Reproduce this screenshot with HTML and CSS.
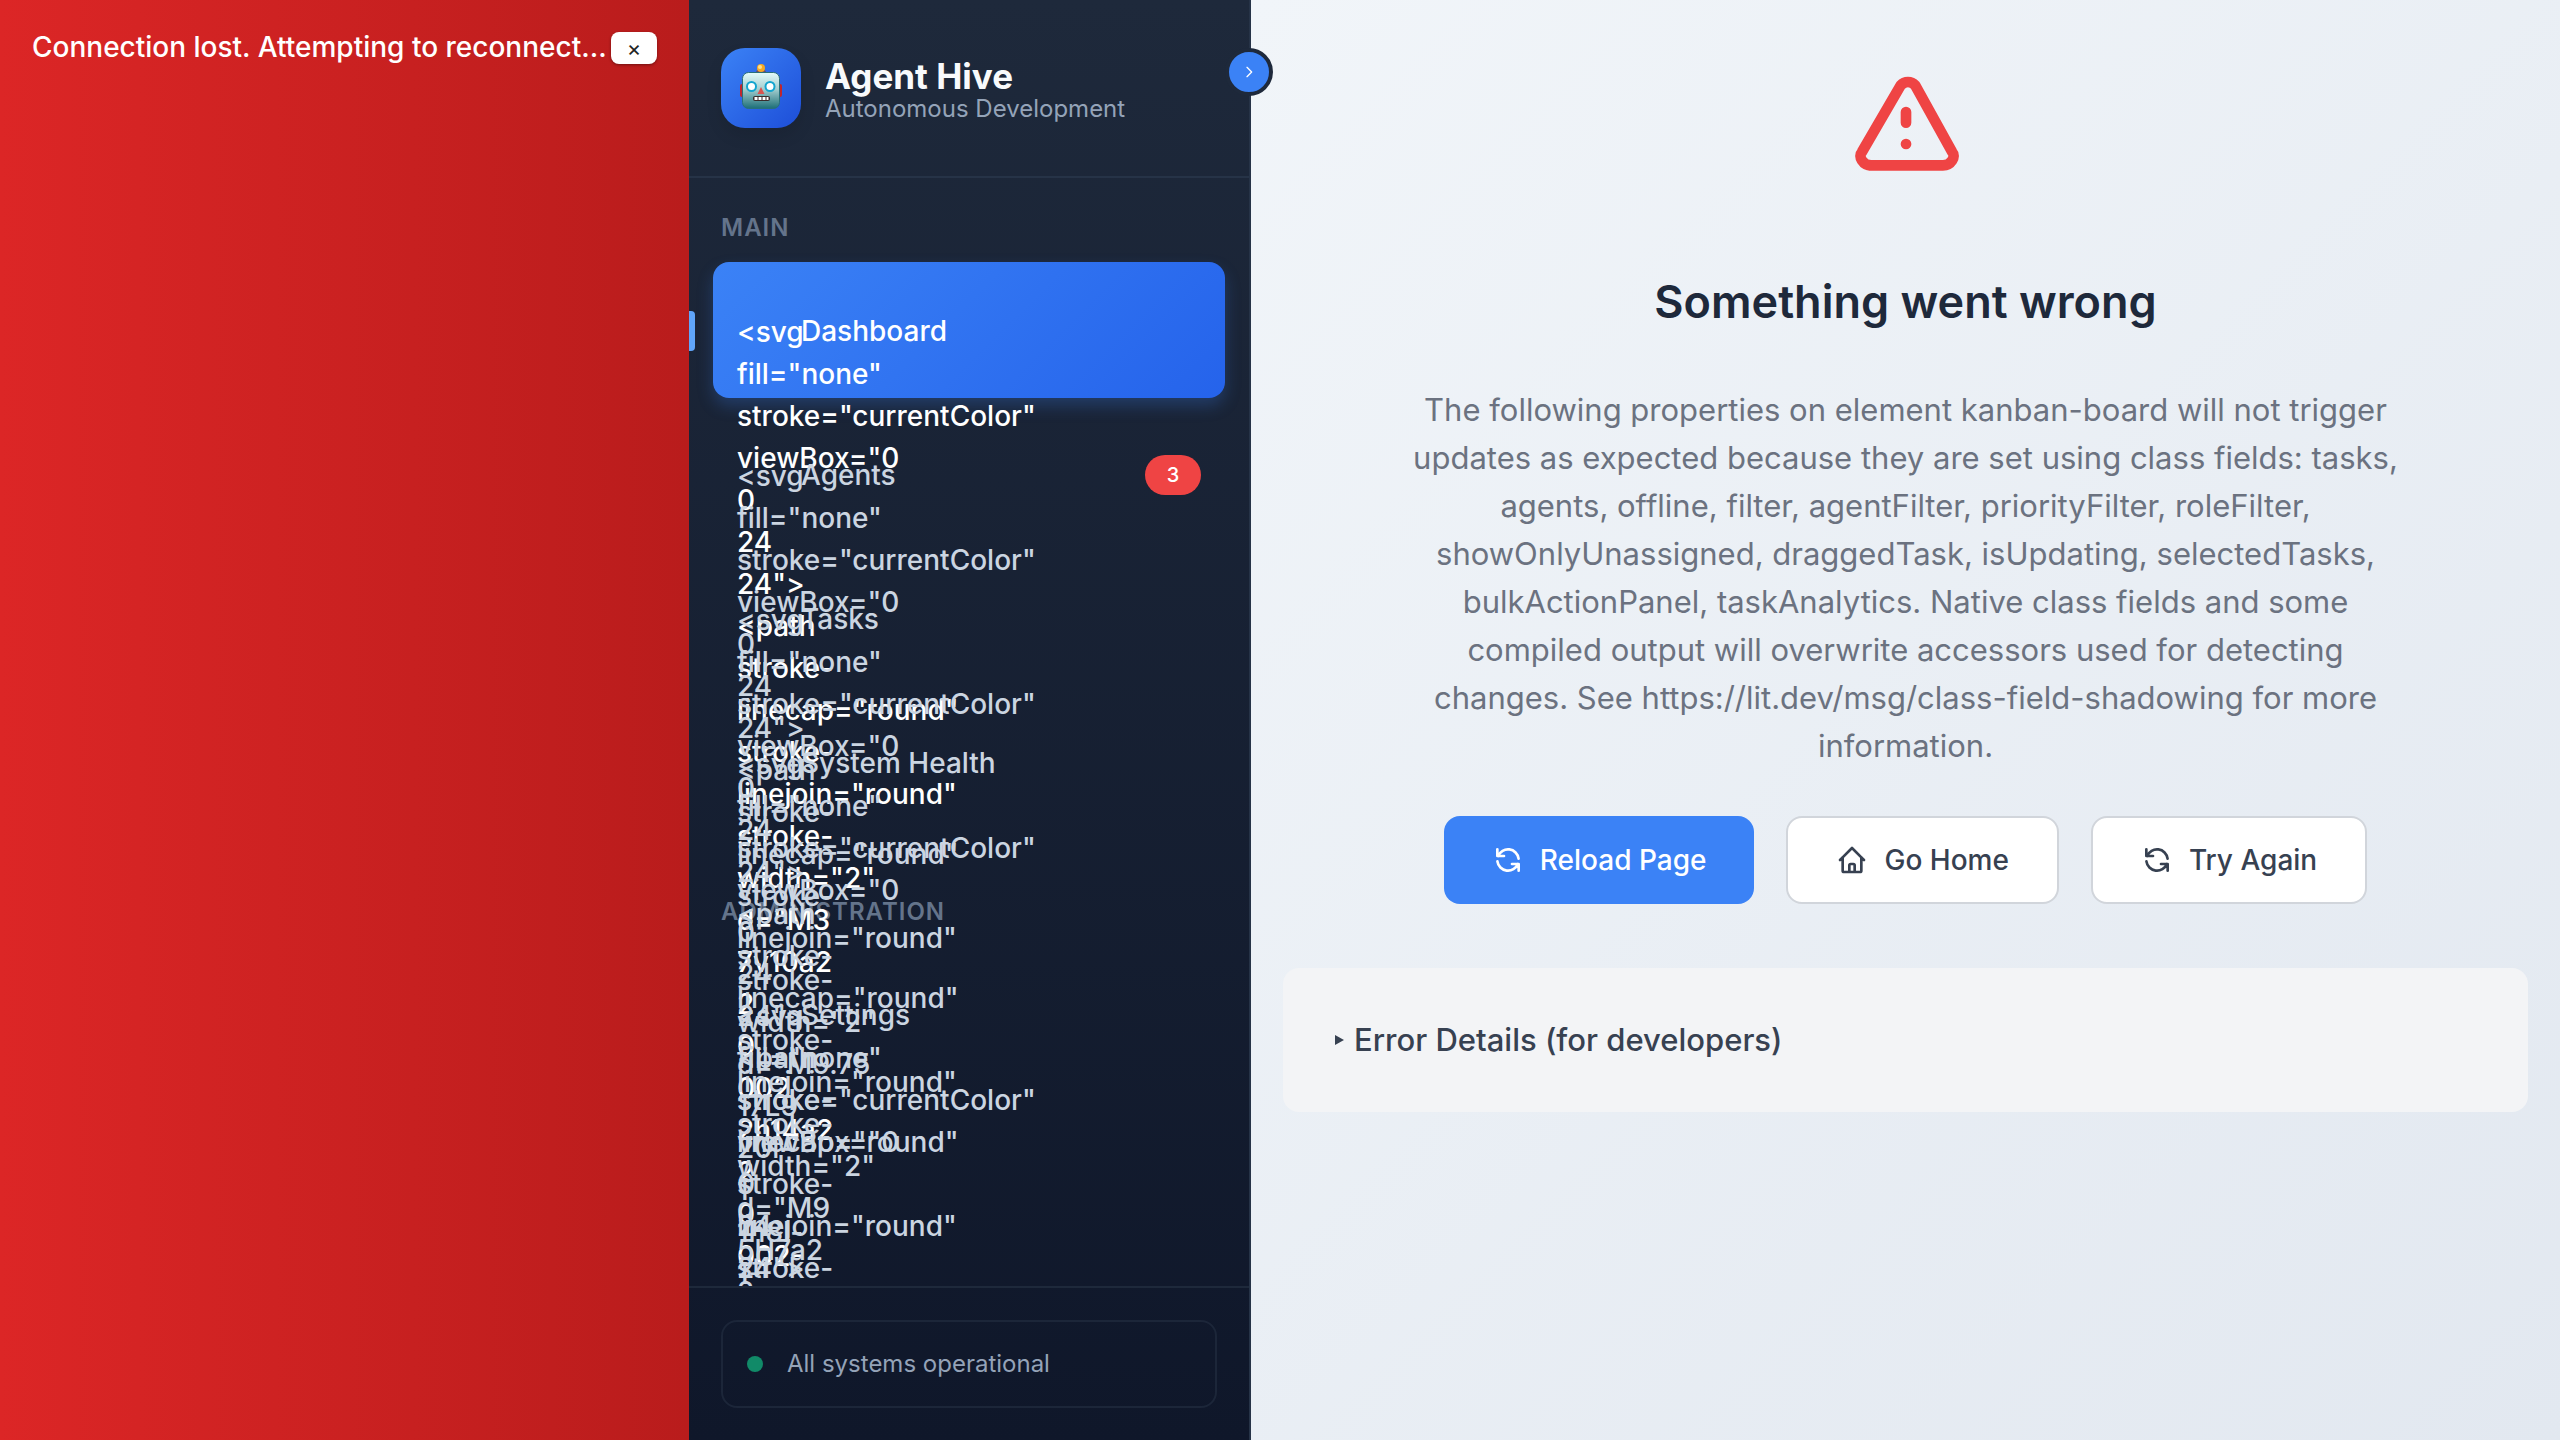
FILE: index.html
```html
<!DOCTYPE html>
<html lang="en">
<head>
<meta charset="utf-8">
<title>Agent Hive</title>
<link rel="stylesheet" href="styles.css">
</head>
<body>
<div class="app">
  <div class="banner" role="alert">
    <span>Connection lost. Attempting to reconnect...</span>
    <button class="banner-close" type="button" aria-label="Dismiss">×</button>
  </div>

  <aside class="sidebar">
    <header class="brand">
      <div class="brand-logo">
        <svg viewBox="0 -3 44 56" width="44" height="56" aria-hidden="true">
          <defs>
            <linearGradient id="face" x1="0" y1="0" x2="0" y2="1">
              <stop offset="0" stop-color="#e4fbfa"/><stop offset=".45" stop-color="#a5cfd0"/><stop offset="1" stop-color="#1d6f78"/>
            </linearGradient>
          </defs>
          <rect x="1" y="21" width="5" height="13" rx="2" fill="#c0262d"/>
          <rect x="38" y="21" width="5" height="13" rx="2" fill="#c0262d"/>
          <ellipse cx="22" cy="9" rx="5" ry="3" fill="#6b4a6b"/>
          <circle cx="22" cy="5" r="4" fill="#f7a823"/>
          <circle cx="21" cy="4" r="2" fill="#ffe08a"/>
          <rect x="3.500" y="9.500" width="37" height="36" rx="6" fill="url(#face)" stroke="#2a6f7a"/>
          <circle cx="12.500" cy="23.500" r="4.500" fill="#fff" stroke="#12a5cf" stroke-width="2"/>
          <circle cx="31" cy="23.500" r="4.500" fill="#fff" stroke="#12a5cf" stroke-width="2"/>
          <path d="M22 24l3.500 7h-7z" fill="#d9534f"/>
          <rect x="14" y="33" width="17" height="5" rx="2" fill="#3b2b2b"/>
          <path d="M15.500 35.500h14" stroke="#fff" stroke-width="3" stroke-dasharray="3 1"/>
        </svg>
      </div>
      <div>
        <h1 class="brand-title">Agent Hive</h1>
        <p class="brand-sub">Autonomous Development</p>
      </div>
    </header>
    <button class="collapse" type="button" aria-label="Toggle sidebar">
      <svg viewBox="0 0 24 24" width="16" height="16" fill="none" stroke="currentColor" stroke-width="2" stroke-linecap="round" stroke-linejoin="round"><path d="M9 5l7 7-7 7"/></svg>
    </button>

    <nav class="nav">
      <section class="nav-section">
        <h2 class="nav-title">Main</h2>
        <a class="nav-item active" href="#dashboard"><span class="nav-icon">&lt;svg fill="none" stroke="currentColor" viewBox="0 0 24 24"&gt; &lt;path stroke-linecap="round" stroke-linejoin="round" stroke-width="2" d="M3 7v10a2 2 0 002 2h14a2 2 0 002-2V9a2 2 0 00-2-2H5</span><span class="nav-label">Dashboard</span></a>
        <a class="nav-item" href="#agents"><span class="nav-icon">&lt;svg fill="none" stroke="currentColor" viewBox="0 0 24 24"&gt; &lt;path stroke-linecap="round" stroke-linejoin="round" stroke-width="2" d="M9.75 17L9 20l-1 1h8l-1-1-.75-3M3</span><span class="nav-label">Agents</span><span class="nav-badge">3</span></a>
        <a class="nav-item" href="#tasks"><span class="nav-icon">&lt;svg fill="none" stroke="currentColor" viewBox="0 0 24 24"&gt; &lt;path stroke-linecap="round" stroke-linejoin="round" stroke-width="2" d="M9 5H7a2 2 0 00-2</span><span class="nav-label">Tasks</span></a>
        <a class="nav-item" href="#health"><span class="nav-icon">&lt;svg fill="none" stroke="currentColor" viewBox="0 0 24 24"&gt; &lt;path stroke-linecap="round" stroke-linejoin="round" stroke-width="2"</span><span class="nav-label">System Health</span></a>
      </section>
      <section class="nav-section">
        <h2 class="nav-title">Administration</h2>
        <a class="nav-item" href="#settings"><span class="nav-icon">&lt;svg fill="none" stroke="currentColor" viewBox="0 0 24 24"&gt; &lt;path</span><span class="nav-label">Settings</span></a>
      </section>
    </nav>

    <footer class="side-footer">
      <div class="status"><span class="status-dot"></span><span>All systems operational</span></div>
    </footer>
  </aside>

  <main class="content">
    <svg class="warn" viewBox="0 0 24 24" fill="none" stroke="currentColor" stroke-width="2" stroke-linecap="round" stroke-linejoin="round" aria-hidden="true"><path d="M12 9v2m0 4h.01m-6.938 4h13.856c1.540 0 2.502-1.667 1.732-2.500L13.732 4c-.77-.833-1.964-.833-2.732 0L3.732 16.500c-.77.833.192 2.500 1.732 2.500z"/></svg>
    <h2 class="error-title">Something went wrong</h2>
    <p class="error-text">The following properties on element kanban-board will not trigger updates as expected because they are set using class fields: tasks, agents, offline, filter, agentFilter, priorityFilter, roleFilter, showOnlyUnassigned, draggedTask, isUpdating, selectedTasks, bulkActionPanel, taskAnalytics. Native class fields and some compiled output will overwrite accessors used for detecting changes. See https://lit.dev/msg/class-field-shadowing for more information.</p>
    <div class="actions">
      <button class="btn primary" type="button">
        <svg class="btn-icon" viewBox="0 0 24 24"><path d="M4 4v5h.582m15.356 2A8.001 8.001 0 004.582 9m0 0H9m11 11v-5h-.581m0 0a8.003 8.003 0 01-15.357-2m15.357 2H15"/></svg>
        Reload Page</button>
      <button class="btn" type="button">
        <svg class="btn-icon" viewBox="0 0 24 24"><path d="M3 12l2-2m0 0l7-7 7 7M5 10v10a1 1 0 001 1h3m10-11l2 2m-2-2v10a1 1 0 01-1 1h-3m-6 0a1 1 0 001-1v-4a1 1 0 011-1h2a1 1 0 011 1v4a1 1 0 001 1m-6 0h6"/></svg>
        Go Home</button>
      <button class="btn" type="button">
        <svg class="btn-icon" viewBox="0 0 24 24"><path d="M4 4v5h.582m15.356 2A8.001 8.001 0 004.582 9m0 0H9m11 11v-5h-.581m0 0a8.003 8.003 0 01-15.357-2m15.357 2H15"/></svg>
        Try Again</button>
    </div>
    <details class="details">
      <summary>Error Details (for developers)</summary>
    </details>
  </main>
</div>
</body>
</html>
```
FILE: styles.css
```css
* { box-sizing: border-box; }

body {
  margin: 0;
  font-family: Inter, "Liberation Sans", sans-serif;
  font-size: 28px;
  line-height: 42px;
  color: #1e293b;
}

h1, h2, p { margin: 0; }

button {
  font: inherit;
  cursor: pointer;
}

.app {
  display: flex;
  height: 100vh;
  overflow: hidden;
}

/* Connection banner */
.banner {
  flex: 0 0 689px;
  display: flex;
  justify-content: space-between;
  align-items: flex-start;
  padding: 26px 32px;
  background: linear-gradient(90deg, #dc2626, #b91c1c);
  color: #fff;
  font-weight: 500;
  white-space: nowrap;
}

.banner-close {
  width: 46px;
  height: 32px;
  margin-top: 6px;
  padding: 0;
  border: 0;
  border-radius: 8px;
  background: #fff;
  box-shadow: 0 1px 3px rgba(0, 0, 0, 0.4);
  color: #222;
  font-size: 22px;
  font-weight: 400;
  line-height: 32px;
}

/* Sidebar */
.sidebar {
  position: relative;
  z-index: 1;
  flex: 0 0 562px;
  display: flex;
  flex-direction: column;
  border-right: 2px solid #263347;
  background: linear-gradient(180deg, #1e293b, #0f172a);
}

.brand {
  display: flex;
  align-items: center;
  gap: 24px;
  padding: 48px 32px;
  border-bottom: 2px solid #263347;
}

.brand-logo {
  display: flex;
  align-items: center;
  justify-content: center;
  width: 80px;
  height: 80px;
  border-radius: 24px;
  background: linear-gradient(135deg, #3b82f6, #1d4ed8);
  box-shadow: 0 8px 16px rgba(0, 0, 0, 0.1);
}

.brand-title {
  padding-top: 4px;
  font-size: 35px;
  line-height: 38px;
  font-weight: 700;
  color: #f8fafc;
}

.brand-sub {
  font-size: 24px;
  line-height: 28px;
  color: #94a3b8;
}

.collapse {
  position: absolute;
  top: 48px;
  right: -24px;
  display: flex;
  align-items: center;
  justify-content: center;
  width: 48px;
  height: 48px;
  padding: 0;
  border: 4px solid #1e293b;
  border-radius: 50%;
  background: #3b82f6;
  color: #fff;
}

.nav {
  flex: 1 1 0;
  min-height: 0;
  overflow: hidden;
  padding: 32px 24px;
}

.nav-section { margin-bottom: 64px; }

.nav-title {
  padding: 0 8px 16px;
  font-size: 24px;
  line-height: 36px;
  font-weight: 600;
  letter-spacing: 1px;
  text-transform: uppercase;
  color: #64748b;
}

.nav-item {
  position: relative;
  display: flex;
  align-items: center;
  gap: 24px;
  height: 136px;
  margin-bottom: 8px;
  padding: 2px 24px 0;
  border-radius: 16px;
  color: #cbd5e1;
  font-weight: 500;
  text-decoration: none;
}

.nav-item.active {
  background: linear-gradient(135deg, #3b82f6, #2563eb);
  box-shadow: 0 8px 16px rgba(59, 130, 246, 0.25);
  color: #fff;
}

.nav-item.active::before {
  content: "";
  position: absolute;
  left: -24px;
  width: 6px;
  height: 40px;
  border-radius: 0 4px 4px 0;
  background: #60a5fa;
}

.nav-icon {
  flex: none;
  width: 40px;
  height: 40px;
}

.nav-label { flex: 1; }

.nav-badge {
  width: 56px;
  height: 40px;
  border-radius: 20px;
  background: #ef4444;
  color: #fff;
  font-size: 20px;
  line-height: 40px;
  text-align: center;
}

.side-footer {
  padding: 32px;
  border-top: 2px solid #1e293b;
}

.status {
  display: flex;
  align-items: center;
  gap: 24px;
  padding: 24px;
  border: 2px solid #1c2639;
  border-radius: 16px;
  color: #94a3b8;
  font-size: 24px;
  line-height: 36px;
}

.status-dot {
  width: 16px;
  height: 16px;
  border-radius: 50%;
  background: #118a68;
}

/* Error panel */
.content {
  flex: 1;
  min-width: 0;
  display: flex;
  flex-direction: column;
  align-items: center;
  padding: 64px 32px;
  background: linear-gradient(135deg, #f1f5f9, #e2e8f0);
}

.warn {
  width: 128px;
  height: 128px;
  color: #ef4444;
}

.error-title {
  margin-top: 74px;
  font-size: 45px;
  line-height: 72px;
  font-weight: 600;
}

.error-text {
  max-width: 1000px;
  margin-top: 48px;
  color: #6b7280;
  font-size: 31px;
  line-height: 48px;
  text-align: center;
}

.actions {
  display: flex;
  gap: 32px;
  margin-top: 46px;
}

.btn {
  display: flex;
  align-items: center;
  gap: 16px;
  height: 88px;
  padding: 0 48px;
  border: 2px solid #d1d5db;
  border-radius: 16px;
  background: #fff;
  color: #374151;
  font-weight: 500;
}

.btn.primary {
  border: 0;
  background: #3b82f6;
  color: #fff;
}

.btn-icon {
  width: 32px;
  height: 32px;
  fill: none;
  stroke: currentColor;
  stroke-width: 2;
  stroke-linecap: round;
  stroke-linejoin: round;
}

.details {
  align-self: stretch;
  margin-top: 64px;
  padding: 48px;
  border-radius: 16px;
  background: #f3f4f6;
  color: #374151;
  font-size: 31px;
  line-height: 48px;
  font-weight: 500;
}

.details summary {
  display: flex;
  align-items: center;
  gap: 10px;
  padding-left: 4px;
  cursor: pointer;
}

.details summary::before {
  content: "";
  border: solid transparent;
  border-width: 5px 0 5px 9px;
  border-left-color: #374151;
}
```
